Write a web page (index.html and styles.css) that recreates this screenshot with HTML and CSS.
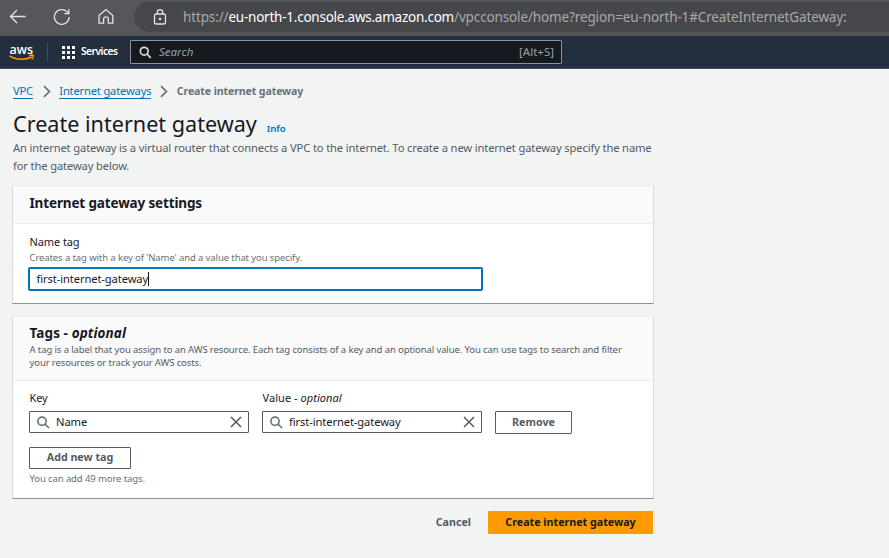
FILE: index.html
```
<!DOCTYPE html>
<html lang="en">
<head>
<meta charset="utf-8">
<title>Create internet gateway</title>
<link rel="stylesheet" href="styles.css">
</head>
<body>
<header class="browser">
  <svg class="back" width="18" height="18" viewBox="0 0 18 18"><path d="M16.5 8.5H1.5M8 2L1.5 8.5L8 15"/></svg>
  <svg class="reload" width="18" height="18" viewBox="0 0 18 18"><path d="M16.2 9A7.4 7.4 0 1 1 13.9 3.6L15.8 5.6M15.8 1.3V5.7H11.4"/></svg>
  <svg class="home" width="18" height="18" viewBox="0 0 18 18"><path d="M2 7.6L8.9 1.6L15.8 7.6V15.2H11.3V11C11.3 8.2 6.6 8.2 6.6 11V15.2H2Z"/></svg>
  <div class="address">
    <svg class="lock" width="14" height="18" viewBox="0 0 14 18"><rect x="1.5" y="6" width="11" height="10" rx="1.8"/><path d="M4.3 6V4.2C4.3 .8 9.7 .8 9.7 4.2V6"/><circle cx="7" cy="11" r=".7"/></svg>
    <div class="url"><span class="scheme">https://</span><span class="host">eu-north-1.console.aws.amazon.com</span><span class="path">/vpcconsole/home?region=eu-north-1#CreateInternetGateway:</span></div>
  </div>
</header>
<nav class="topnav">
  <svg class="logo" width="26" height="22" viewBox="0 0 26 22"><text x="0.5" y="13" textLength="23.5" lengthAdjust="spacingAndGlyphs">aws</text><path d="M0.5 14.8C7 19.2 17 19 22.5 16"/><path d="M20.2 14.8C22 14.1 24 14.2 24.2 14.6C24.5 15.3 24 17 22.8 18.2"/></svg>
  <span class="divider"></span>
  <svg class="apps" width="13" height="13" viewBox="0 0 13 13"><path d="M0 0h3v3H0zM5 0h3v3H5zM10 0h3v3h-3zM0 5h3v3H0zM5 5h3v3H5zM10 5h3v3h-3zM0 10h3v3H0zM5 10h3v3H5zM10 10h3v3h-3z"/></svg>
  <span class="services">Services</span>
  <div class="search">
    <svg width="13" height="13" viewBox="0 0 13 13"><circle cx="5.2" cy="5.2" r="3.9"/><path d="M8 8L11.8 11.8"/></svg>
    <span class="placeholder">Search</span><span class="shortcut">[Alt+S]</span>
  </div>
</nav>
<main>
  <div class="crumbs">
    <a>VPC</a>
    <svg width="8" height="13" viewBox="0 0 8 13"><path d="M1 1.2L6.4 6.5L1 11.8"/></svg>
    <a>Internet gateways</a>
    <svg width="8" height="13" viewBox="0 0 8 13"><path d="M1 1.2L6.4 6.5L1 11.8"/></svg>
    <span class="current">Create internet gateway</span>
  </div>
  <div class="title"><h1>Create internet gateway</h1><a class="info">Info</a></div>
  <p class="lead">An internet gateway is a virtual router that connects a VPC to the internet. To create a new internet gateway specify the name<br>for the gateway below.</p>
  <section class="card settings">
    <div class="card-head"><h2>Internet gateway settings</h2></div>
    <div class="card-body">
      <div class="label">Name tag</div>
      <div class="hint">Creates a tag with a key of 'Name' and a value that you specify.</div>
      <div class="input focused"><span class="value">first-internet-gateway</span><i class="caret"></i></div>
    </div>
  </section>
  <section class="card tags">
    <div class="card-head"><h2>Tags - <em>optional</em></h2>
      <p class="hint">A tag is a label that you assign to an AWS resource. Each tag consists of a key and an optional value. You can use tags to search and filter<br>your resources or track your AWS costs.</p></div>
    <div class="card-body">
      <div class="row">
        <div class="field"><div class="label">Key</div>
          <div class="input"><svg width="13" height="13" viewBox="0 0 13 13"><circle cx="5" cy="5.2" r="4.1"/><path d="M8 8.2L12 12"/></svg><span class="value">Name</span><svg class="clear" width="12" height="12" viewBox="0 0 12 12"><path d="M1 1L11 11M11 1L1 11"/></svg></div></div>
        <div class="field"><div class="label wide">Value - <em>optional</em></div>
          <div class="input"><svg width="13" height="13" viewBox="0 0 13 13"><circle cx="5" cy="5.2" r="4.1"/><path d="M8 8.2L12 12"/></svg><span class="value">first-internet-gateway</span><svg class="clear" width="12" height="12" viewBox="0 0 12 12"><path d="M1 1L11 11M11 1L1 11"/></svg></div></div>
        <button class="btn remove">Remove</button>
      </div>
      <button class="btn add">Add new tag</button>
      <div class="hint">You can add 49 more tags.</div>
    </div>
  </section>
  <div class="actions"><button class="link">Cancel</button><button class="primary">Create internet gateway</button></div>
</main>
</body>
</html>
```
FILE: styles.css
```
* { box-sizing: border-box; }
body { margin: 0; background: #f2f3f3; color: #16191f; font: 11.2px/16px "Noto Sans", sans-serif; width: 889px; height: 558px; overflow: hidden; }
svg { fill: none; flex: none; }
h1, h2, p { margin: 0; }
.browser { height: 36px; background: #56575b; display: flex; align-items: center; padding: 0 0 2px 9px; }
.browser svg { stroke: #e4e4e5; stroke-width: 1.3; }
.reload { margin-left: 26px; }
.home { margin-left: 26px; }
.address { margin-left: 19px; width: 755px; height: 30px; border-radius: 15px 0 0 15px; background: #46474a; display: flex; align-items: center; padding-left: 19px; }
.url { margin-left: 16px; font-size: 13.5px; line-height: 20px; white-space: nowrap; color: #a9a9aa; letter-spacing: -0.13px; }
.host { color: #fff; letter-spacing: -0.24px; }
.topnav { height: 33px; background: #232f3e; border-bottom: 1px solid #414d5c; display: flex; align-items: center; padding-left: 9px; }
.logo { fill: #fff; font: 600 13px "Open Sans", sans-serif; overflow: visible; }
.logo path { fill: none; stroke: #ff9900; stroke-width: 1.5; }
.divider { width: 1px; height: 18px; background: #414d5c; margin: 0 14px 0 12px; }
.apps { fill: #fff; }
.services { margin: 0 0 2px 6px; width: 36px; color: #fff; font-weight: 600; font-size: 10.2px; letter-spacing: -0.5px; }
.search { margin-left: 13px; width: 432px; height: 24px; border: 1px solid #879596; border-radius: 1px; background: #16191f; color: #95a5a6; display: flex; align-items: center; padding: 0 7px 0 8px; font-size: 11.5px; }
.search svg { stroke: #d5dbdb; stroke-width: 1.7; }
.placeholder { margin-left: 7px; font-style: italic; }
.shortcut { margin-left: auto; }
main { padding: 14px 0 0 12px; width: 654px; }
.crumbs { display: flex; align-items: center; height: 16px; padding-left: 1px; color: #687078; letter-spacing: -0.19px; }
.crumbs svg { stroke: #687078; stroke-width: 1.7; margin: 0 8.5px 0 9px; }
.crumbs a { color: #0073bb; border-bottom: 1px solid #0073bb; line-height: 15px; }
.crumbs a:first-child { margin-right: 0.8px; }
.current { font-weight: 700; font-size: 10.6px; letter-spacing: -0.12px; }
.title { display: flex; align-items: baseline; height: 40px; padding: 9px 0 0 1px; }
h1 { font-size: 21.6px; line-height: 32px; font-weight: 400; }
.info { margin-left: 10px; color: #0073bb; font-size: 9.6px; font-weight: 600; letter-spacing: -0.1px; }
.lead { padding-left: 1px; color: #545b64; line-height: 18px; white-space: nowrap; letter-spacing: -0.138px; }
.card { background: #fff; border: 1px solid #d5dbdb; border-top-color: #eaeded; border-bottom-color: #879596; width: 642px; }
.settings { margin-top: 10px; height: 119px; }
.tags { margin-top: 12px; height: 183px; }
.card-head { background: #fafafa; border-bottom: 1px solid #eaeded; padding: 8px 16px 0 16.5px; height: 38px; }
.tags .card-head { height: 64px; padding-top: 7px; }
h2 { font-size: 13.5px; line-height: 18px; font-weight: 700; letter-spacing: -0.14px; }
.tags h2 { letter-spacing: 0.1px; margin-bottom: 1px; }
.card-body { padding: 10px 15px 0 16px; }
.tags .card-body { padding-top: 9px; }
.label { font-size: 11px; letter-spacing: -0.1px; padding-left: 0.5px; }
.wide { letter-spacing: 0.05px; }
.hint { font-size: 9.5px; line-height: 13px; color: #687078; white-space: nowrap; letter-spacing: -0.104px; }
.settings .hint { margin-top: 1px; }
.card-head .hint { color: #545b64; }
.card-body .hint { padding-left: 0.5px; }
.input { height: 22px; width: 220px; border: 1px solid #545b64; border-radius: 1px; display: flex; align-items: center; padding: 0 6px 0 7px; }
.value { letter-spacing: -0.11px; }
.input svg { stroke: #687078; stroke-width: 1.6; margin-right: 6px; }
.input .clear { margin: 0 0 0 auto; stroke: #545b64; stroke-width: 1.5; }
.focused { margin: 3px 0 0 -1px; width: 455px; height: 24px; border: 2px solid #0073bb; border-radius: 2px; padding-left: 6.5px; }
.caret { width: 1px; height: 14px; background: #16191f; }
.row { display: flex; gap: 13px; }
.field .label { margin-bottom: 5px; }
button { font: 700 10.7px/16px "Noto Sans", sans-serif; padding: 0 0 2px; border-radius: 1px; white-space: nowrap; }
.btn { border: 1px solid #545b64; background: #fff; color: #545b64; }
.remove { width: 77px; height: 23px; margin-top: 21px; }
.add { width: 102px; height: 22px; display: block; margin: 13px 0 3px; }
.actions { display: flex; justify-content: flex-end; width: 641px; margin-top: 12px; }
.link { background: none; border: 0; color: #545b64; margin-right: 17px; }
.primary { width: 165px; height: 23px; border: 0; background: #ff9900; color: #16191f; }
```
